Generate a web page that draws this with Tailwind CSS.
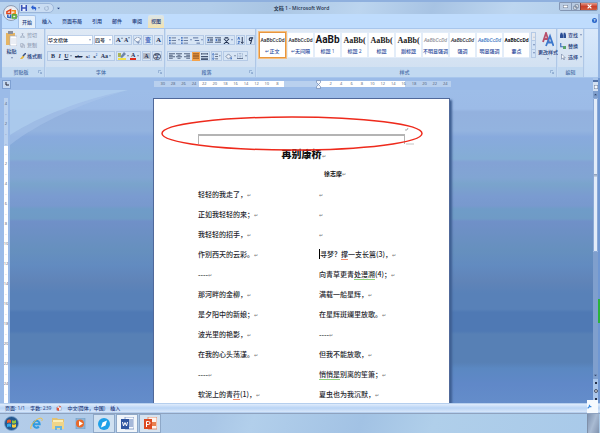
<!DOCTYPE html>
<html lang="zh-CN">
<head>
  <meta charset="UTF-8" />
  <meta name="viewport" content="width=device-width, initial-scale=1.0" />
  <title>文档 1 - Microsoft Word</title>
  <script src="https://cdn.jsdelivr.net/npm/@tailwindcss/browser@4"></script>
</head>
<body class="flex h-screen flex-col overflow-hidden bg-[#93b4e2] font-['Open_Sans','Noto_Sans_CJK_SC',sans-serif] text-[5px] leading-none font-medium text-[#1e3a7a]">
  <!-- shared icons -->
  <svg class="hidden">
    <symbol id="launch" viewBox="0 0 8 8"><path d="M1 6V1h5M4 4l3 3M7 4v3H4" fill="none" stroke="#6f8fbd" /></symbol>
    <symbol id="down" viewBox="0 0 4 4"><path d="M0 1h4L2 3z" fill="currentColor" /></symbol>
    <symbol id="lines" viewBox="0 0 8 8"><path d="M0 1h8M0 3h5M0 5h8M0 7h5" stroke="currentColor" fill="none" /></symbol>
    <symbol id="list" viewBox="0 0 8 8"><path d="M3 1h5M3 4h5M3 7h5" stroke="#5d6f90" fill="none" /><path d="M0 1h2M0 4h2M0 7h2" stroke="#2f62b8" stroke-width="1.6" /></symbol>
    <symbol id="indent" viewBox="0 0 8 8"><path d="M0 1h8M4 3h4M4 5h4M0 7h8" stroke="#2b3b5c" fill="none" /><path d="M3 2v4L0 4z" fill="#2f62b8" /></symbol>
  </svg>

  <!-- title bar -->
  <header class="relative z-10 flex h-[14px] shrink-0 items-center border-t-2 border-[#8fb0de] bg-[linear-gradient(110deg,#b9d3ee_0%,#b2cdea_35%,#a9c5e3_45%,#bcd5ef_60%,#a7c3e3_72%,#bdd6f0_85%,#b0cce9_100%)] pl-[3px]">
    <button class="mt-[10px] flex size-[16px] shrink-0 items-center justify-center rounded-full border border-[#8f9db5] bg-[radial-gradient(#ffffff,#d5dce8)]" aria-label="Office">
      <svg class="size-[11px]" viewBox="0 0 12 12" fill="none" stroke-width="1.7">
        <path d="M1 4l4-2v4H1z" stroke="#e2471d" /><path d="M6 3h4v3H7" stroke="#f08a1c" />
        <path d="M2 7v3l3 .5V7" stroke="#2a62c0" /><path d="M7 7.500h4V11H7z" stroke="#5aa83c" />
      </svg>
    </button>
    <div class="flex h-[10px] items-center gap-[4px] rounded-r-full border border-[#9bb6da] bg-[#c9dcf2] pr-[4px] pl-[1px]">
      <button aria-label="保存"><svg class="size-[6px]" viewBox="0 0 8 8"><path d="M0 0h8v8H0z" fill="#3a53b8" /><path d="M2 0h4v3H2zM2 5h4v3H2z" fill="#eef3ff" /></svg></button>
      <button class="flex items-center gap-[1px]" aria-label="撤消"><svg class="size-[6px]" viewBox="0 0 8 8"><path d="M0 3l3-3v2c5 0 5 4 2 6 1-2 1-3-2-3v2z" fill="#2b5fd0" /></svg><svg class="size-[2px]"><use href="#down" /></svg></button>
      <button aria-label="恢复"><svg class="size-[5px]" viewBox="0 0 8 8" fill="none" stroke="#9db2cf" stroke-width="1.500"><path d="M2 1C0 4 1 7 4 7s4-3 2-6M4 1h3" /></svg></button>
    </div>
    <button class="ml-[3px]" aria-label="自定义"><svg class="size-[3px]"><use href="#down" /></svg></button>
    <h1 class="flex-1 pr-[16px] text-center text-[5px] font-semibold text-[#26334d]">文档 1 - Microsoft Word</h1>
    <div class="mr-[2px] mb-[3px] flex h-[9px] overflow-hidden rounded-b-[2px] border border-[#8396b4] text-white">
      <button class="flex w-[11px] items-center justify-center bg-[#b9cbe2]" aria-label="最小化"><svg class="h-[3px] w-[5px]"><path d="M0 0h5v3H0z" fill="#fff" stroke="#65758f" /></svg></button>
      <button class="flex w-[9px] items-center justify-center border-l border-[#8396b4] bg-[#b9cbe2]" aria-label="还原"><svg class="size-[6px]" viewBox="0 0 8 8" fill="#fff" stroke="#65758f"><path d="M3 1h4v4H3zM1 3h4v4H1z" /></svg></button>
      <button class="flex w-[17px] items-center justify-center border-l border-[#8f3a32] bg-[linear-gradient(#e29a8a,#c9402c_50%,#d05a3c)]" aria-label="关闭"><svg class="size-[5px]" viewBox="0 0 8 8" stroke="#fff" stroke-width="2"><path d="M1 1l6 6M7 1L1 7" /></svg></button>
    </div>
  </header>

  <!-- ribbon tabs -->
  <nav class="mx-[2px] flex h-[14px] shrink-0 items-end gap-[2px] bg-[#bfdcfd] pl-[16px]">
    <button class="h-[13px] rounded-t-[2px] border border-b-0 border-[#a3c1e8] bg-[#e6f0fb] px-[3px]">开始</button>
    <button class="h-[13px] px-1">插入</button>
    <button class="h-[13px] px-1">页面布局</button>
    <button class="h-[13px] px-1">引用</button>
    <button class="h-[13px] px-1">邮件</button>
    <button class="h-[13px] px-1">审阅</button>
    <button class="h-[13px] rounded-t-[2px] bg-[linear-gradient(#dce6ea,#f3e2ae)] px-[3px]">视图</button>
    <button class="mr-[1px] mb-[5px] ml-auto flex size-[5px] items-center justify-center rounded-full bg-[#2a66c8] text-[4px] font-bold text-white" aria-label="帮助">?</button>
  </nav>

  <!-- ribbon -->
  <section class="mx-[2px] flex h-[50px] shrink-0 gap-[1px] border-y border-[#a8c6ec] bg-[#c9ddf4]">
    <div class="flex w-[43px] flex-col border-r border-[#afc7e6] bg-[linear-gradient(#dfe9f5,#cfdff1)]">
      <div class="flex flex-1 gap-[3px] pt-[2px] pl-[4px]">
        <button class="flex w-[11px] flex-col items-center gap-[3px]">
          <svg class="h-[15px] w-[11px]" viewBox="0 0 11 15"><path d="M0 2h9v12H0z" fill="#e5b463" /><path d="M2 0h5v3H2z" fill="#8b8f9c" /><path d="M4 5h7v10H4z" fill="#fff" stroke="#9aa9c4" stroke-width=".6" /><path d="M5 8h5M5 10h5M5 12h5" stroke="#b9c6dd" stroke-width=".6" /></svg>
          粘贴
          <svg class="size-[2px]"><use href="#down" /></svg>
        </button>
        <div class="flex flex-col gap-[5px] pt-[2px]">
          <button class="flex items-center gap-[2px] text-[#93a1b8]"><svg class="size-[5px]" viewBox="0 0 8 8" fill="none" stroke="currentColor"><path d="M3 0l2 5M5 0L3 5" /><circle cx="2" cy="6.500" r="1.200" /><circle cx="6" cy="6.500" r="1.200" /></svg>剪切</button>
          <button class="flex items-center gap-[2px] text-[#93a1b8]"><svg class="size-[5px]" viewBox="0 0 8 8" fill="#eef2f8" stroke="currentColor"><path d="M1 1h4v5H1zM3 3h4v5H3z" /></svg>复制</button>
          <button class="flex items-center gap-[1px] whitespace-nowrap"><svg class="size-[6px]" viewBox="0 0 8 8"><path d="M4 3l2 2-3 3H0z" fill="#e8b740" /><path d="M8 0L4 4" stroke="#3a4f80" stroke-width="2" /></svg>格式刷</button>
        </div>
      </div>
      <h2 class="flex h-[10px] items-center bg-[#c2d9f1] px-[2px] text-[5px] text-[#4a6fa8]"><span class="flex-1 text-center">剪贴板</span><svg class="size-[4px]"><use href="#launch" /></svg></h2>
    </div>

    <div class="flex w-[119px] flex-col border-r border-[#afc7e6] bg-[linear-gradient(#dfe9f5,#cfdff1)]">
      <div class="flex flex-1 flex-col gap-[6px] pt-[6px] pl-[1px]">
        <div class="flex h-[10px] items-stretch gap-[1px]">
          <label class="relative flex w-[46px] items-center"><select class="h-full w-full appearance-none border border-[#bdd0ea] bg-white text-[5px] text-[#222b3c]" aria-label="字体"><option>华文楷体</option></select><svg class="absolute right-[2px] size-[2px]"><use href="#down" /></svg></label>
          <label class="relative flex w-[19px] items-center"><select class="h-full w-full appearance-none border border-[#bdd0ea] bg-white text-[5px] text-[#222b3c]" aria-label="字号"><option>四号</option></select><svg class="absolute right-[2px] size-[2px]"><use href="#down" /></svg></label>
          <div class="flex w-[18px] items-center justify-around border border-[#b5cae6] bg-[#d7e5f5] font-['Liberation_Serif'] font-bold text-[#1f2f50]">
            <button class="flex items-start text-[7px]" aria-label="增大字体">A<svg class="size-[2px] rotate-180"><use href="#down" /></svg></button><button class="flex items-start text-[6px]" aria-label="缩小字体">A<svg class="size-[2px]"><use href="#down" /></svg></button>
          </div>
          <button class="flex w-[9px] items-center justify-center border border-[#b5cae6] bg-[#d7e5f5]" aria-label="清除格式"><svg class="size-[7px]" viewBox="0 0 8 8"><path d="M0 3l4-3 4 2-4 4z" fill="#f3f6fb" stroke="#6c7ea0" stroke-width=".7" /><path d="M2 5l3 3 2-3z" fill="#7f93b8" /></svg></button>
          <button class="w-[10px] border border-[#b5cae6] bg-[#d7e5f5] text-[6px] font-bold text-[#2f57b5]">变</button>
          <button class="w-[9px] border border-[#b5cae6] bg-[#d7e5f5] font-['Liberation_Serif'] text-[7px] font-bold text-[#1f2f50]">A</button>
        </div>
        <div class="flex h-[10px] items-stretch gap-[1px] text-[#1f2f50]">
          <div class="flex w-[68px] items-center justify-between border border-[#b5cae6] bg-[#d7e5f5] px-[3px] font-['Liberation_Serif'] text-[6px] font-bold">
            <button>B</button><button class="italic">I</button>
            <button class="flex items-center gap-[1px]"><span class="underline">U</span><svg class="size-[2px]"><use href="#down" /></svg></button>
            <button class="text-[5px] line-through">abc</button><button class="text-[5px]">x<sub class="text-[3px] text-[#2f62b8]">2</sub></button><button class="text-[5px]">x<sup class="text-[3px] text-[#2f62b8]">2</sup></button>
            <button class="flex items-center gap-[1px]">Aa<svg class="size-[2px]"><use href="#down" /></svg></button>
          </div>
          <div class="flex w-[25px] items-center justify-around border border-[#b5cae6] bg-[#d7e5f5]">
            <button class="flex items-center gap-[1px]" aria-label="突出显示"><svg class="size-[8px]" viewBox="0 0 8 8"><path d="M0 6h8v2H0z" fill="#f2e24a" /><path d="M2 5l4-5 2 2-4 4z" fill="#6e86a8" /><path d="M0 1h3v4H0z" fill="#a9b35c" /></svg><svg class="size-[2px]"><use href="#down" /></svg></button>
            <button class="flex items-center gap-[1px]"><span class="border-b-2 border-[#e02c1d] px-[1px] font-['Liberation_Serif'] text-[6px] font-bold">A</span><svg class="size-[2px]"><use href="#down" /></svg></button>
          </div>
          <button class="flex w-[9px] items-center justify-center border border-[#b5cae6] bg-[#d7e5f5]"><span class="bg-[#b3b9c5] px-[1px] font-['Liberation_Serif'] text-[6px] font-bold">A</span></button>
          <button class="flex w-[10px] items-center justify-center border border-[#b5cae6] bg-[#d7e5f5]"><span class="rounded-full border border-[#43506b] text-[5px] font-bold">字</span></button>
        </div>
      </div>
      <h2 class="flex h-[10px] items-center bg-[#c2d9f1] px-[2px] text-[5px] text-[#4a6fa8]"><span class="flex-1 pr-[4px] text-center">字体</span><svg class="size-[4px]"><use href="#launch" /></svg></h2>
    </div>

    <div class="flex w-[90px] flex-col border-r border-[#afc7e6] bg-[linear-gradient(#dfe9f5,#cfdff1)]">
      <div class="flex flex-1 flex-col gap-[6px] pt-[6px] pl-[1px]">
        <div class="flex h-[10px] items-stretch gap-[1px]">
          <div class="flex w-[37px] items-center justify-around border border-[#b5cae6] bg-[#d7e5f5]">
            <button class="flex items-center gap-[2px]" aria-label="项目符号"><svg class="size-[7px]"><use href="#list" /></svg><svg class="size-[2px]"><use href="#down" /></svg></button>
            <button class="flex items-center gap-[2px]" aria-label="编号"><svg class="size-[7px]"><use href="#list" /></svg><svg class="size-[2px]"><use href="#down" /></svg></button>
            <button class="flex items-center gap-[1px]" aria-label="多级列表"><svg class="size-[7px]" viewBox="0 0 8 8" stroke="#4b6595"><path d="M0 1h6M2 4h5M4 7h4" /></svg><svg class="size-[2px]"><use href="#down" /></svg></button>
          </div>
          <div class="flex w-[30px] items-center justify-around border border-[#b5cae6] bg-[#d7e5f5]">
            <button aria-label="减少缩进"><svg class="size-[6px]"><use href="#indent" /></svg></button>
            <button aria-label="增加缩进"><svg class="size-[6px]"><use href="#indent" /></svg></button>
            <button class="flex items-center gap-[1px]" aria-label="中文版式"><svg class="size-[7px]" viewBox="0 0 8 8" stroke="#1f2f50" stroke-width="1.200"><path d="M1 2l6 6M7 2L1 8M2 1h4" /></svg><svg class="size-[2px]"><use href="#down" /></svg></button>
          </div>
          <button class="flex w-[9px] items-center justify-center border border-[#b5cae6] bg-[#d7e5f5]" aria-label="排序"><svg class="size-[7px]" viewBox="0 0 8 8" fill="none"><path d="M1 3l1-3 1 3M1 5h2L1 8h2" stroke="#2f62b8" /><path d="M6 0v7M4.500 5.500L6 7.500l1.500-2" stroke="#1f2f50" /></svg></button>
          <button class="flex w-[9px] items-center justify-center border border-[#b5cae6] bg-[#d7e5f5]" aria-label="显示标记"><svg class="size-[7px]" viewBox="0 0 8 8" fill="none"><path d="M6 1L4 8M7 1H4a1 1 0 000 3h1" stroke="#1f2f50" stroke-width="1.200" /></svg></button>
        </div>
        <div class="flex h-[10px] items-stretch gap-[1px] text-[#2b3b5c]">
          <div class="flex w-[43px] items-center justify-around border border-[#b5cae6] bg-[#d7e5f5]">
            <button aria-label="左对齐"><svg class="size-[6px]"><use href="#lines" /></svg></button>
            <button aria-label="居中"><svg class="size-[6px]" viewBox="0 0 8 8" stroke="currentColor"><path d="M0 1h8M2 3h4M0 5h8M2 7h4" /></svg></button>
            <button aria-label="右对齐"><svg class="size-[6px] -scale-x-100"><use href="#lines" /></svg></button>
            <button class="flex h-[9px] w-[8px] items-center justify-center bg-[#f4a34c]" aria-label="两端对齐"><svg class="size-[6px]" viewBox="0 0 8 8" stroke="#7c4417"><path d="M0 1h8M0 3h8M0 5h8M0 7h8" /></svg></button>
            <button aria-label="分散对齐"><svg class="size-[7px]" viewBox="0 0 8 8" stroke="currentColor"><path d="M0 0v2M8 0v2M0 1h8M0 4h8M0 6h8M0 7.500h8" /></svg></button>
          </div>
          <button class="flex w-[11px] items-center justify-center gap-[1px] border border-[#b5cae6] bg-[#d7e5f5]" aria-label="行距"><svg class="size-[7px]" viewBox="0 0 8 8" fill="none"><path d="M1.500 0v8M0 2l1.500-2L3 2M0 6l1.500 2L3 6" stroke="#2f62b8" stroke-width=".8" /><path d="M4 1h4M4 4h4M4 7h4" stroke="#43506b" /></svg><svg class="size-[2px]"><use href="#down" /></svg></button>
          <div class="flex w-[25px] items-center justify-around border border-[#b5cae6] bg-[#d7e5f5]">
            <button class="flex items-center gap-[2px]" aria-label="底纹"><svg class="size-[7px]" viewBox="0 0 8 8"><path d="M1 4l3-3 3 3-3 3z" fill="#e9eef6" stroke="#5f7396" stroke-width=".8" /><path d="M7 4l1 3H6z" fill="#2f62b8" /></svg><svg class="size-[2px]"><use href="#down" /></svg></button>
            <button class="flex items-center gap-[2px]" aria-label="边框"><svg class="size-[6px]" viewBox="0 0 8 8" fill="none" stroke="#7088b0" stroke-width=".8"><path d="M.5.5h7v7h-7zM4 0v8M0 4h8" stroke-dasharray="1 1" /><path d="M0 7.500h8" stroke="#1f2f50" /></svg><svg class="size-[2px]"><use href="#down" /></svg></button>
          </div>
        </div>
      </div>
      <h2 class="flex h-[10px] items-center bg-[#c2d9f1] px-[2px] text-[5px] text-[#4a6fa8]"><span class="flex-1 pr-[4px] text-center">段落</span><svg class="size-[4px]"><use href="#launch" /></svg></h2>
    </div>

    <!-- style gallery -->
    <div class="flex min-w-0 flex-1 flex-col border-r border-[#afc7e6] bg-[linear-gradient(#dfe9f5,#cfdff1)]">
      <div class="flex flex-1 items-start gap-[2px] pt-[3px] pl-[2px]">
        <div class="flex h-[26px] gap-[2px] bg-[#e3edf9] text-center whitespace-nowrap text-[#2a4a9c]">
          <button class="flex w-[27px] flex-col items-center justify-between border border-[#e8963e] bg-white pt-[5px] pb-[3px] ring-1 ring-[#f3bf82]"><span class="font-['Roboto'] text-[#2b2b33]">AaBbCcDd</span><span>↵正文</span></button>
          <button class="my-[1px] flex w-[25px] flex-col items-center justify-between bg-white pt-[5px] pb-[3px]"><span class="font-['Roboto'] text-[#2b2b33]">AaBbCcDd</span><span>↵无间隔</span></button>
          <button class="my-[1px] flex w-[25px] flex-col items-center justify-between bg-white pt-[2px] pb-[3px]"><span class="font-['Roboto'] text-[10px] font-bold text-[#15151c]">AaBb</span><span>标题 1</span></button>
          <button class="my-[1px] flex w-[25px] flex-col items-center justify-between bg-white pt-[4px] pb-[3px]"><span class="font-['Liberation_Serif'] text-[8px] font-bold text-[#222]">AaBb(</span><span>标题 2</span></button>
          <button class="my-[1px] flex w-[25px] flex-col items-center justify-between bg-white pt-[4px] pb-[3px]"><span class="font-['Liberation_Serif'] text-[8px] font-bold text-[#222]">AaBb(</span><span>标题</span></button>
          <button class="my-[1px] flex w-[25px] flex-col items-center justify-between bg-white pt-[4px] pb-[3px]"><span class="font-['Liberation_Serif'] text-[8px] font-bold text-[#222]">AaBb(</span><span>副标题</span></button>
          <button class="my-[1px] flex w-[25px] flex-col items-center justify-between bg-white pt-[5px] pb-[3px]"><span class="font-['Roboto'] text-[#8e8e96] italic">AaBbCcDd</span><span>不明显强调</span></button>
          <button class="my-[1px] flex w-[25px] flex-col items-center justify-between bg-white pt-[5px] pb-[3px]"><span class="font-['Roboto'] text-[#2b2b33] italic">AaBbCcDd</span><span>强调</span></button>
          <button class="my-[1px] flex w-[25px] flex-col items-center justify-between bg-white pt-[5px] pb-[3px]"><span class="font-['Roboto'] text-[#3f78c4] italic">AaBbCcDd</span><span>明显强调</span></button>
          <button class="my-[1px] flex w-[25px] flex-col items-center justify-between bg-white pt-[5px] pb-[3px]"><span class="font-['Roboto'] font-bold text-[#15151c]">AaBbCcDd</span><span>要点</span></button>
        </div>
        <div class="flex h-[26px] w-[5px] shrink-0 flex-col divide-y divide-[#b5cae6] border border-[#b5cae6] bg-[#d3e3f6]">
          <button class="flex flex-1 items-center justify-center bg-[#e6e9ee] text-[#a5afbf]" aria-label="上一行"><svg class="size-[2px] rotate-180"><use href="#down" /></svg></button>
          <button class="flex flex-1 items-center justify-center" aria-label="下一行"><svg class="size-[2px]"><use href="#down" /></svg></button>
          <button class="flex flex-1 items-center justify-center" aria-label="更多"><svg class="size-[2px]"><use href="#down" /></svg></button>
        </div>
        <button class="flex flex-1 flex-col items-center gap-[3px] whitespace-nowrap">
          <svg class="h-[15px] w-[12px]" viewBox="0 0 12 15" fill="none" stroke-width="1.800"><path d="M1 10L4 1l3 9M2 7h4" stroke="#b8506c" /><path d="M4 14L8 4l3.500 10M5.500 10.500h5" stroke="#3d78cc" /></svg>
          更改样式
          <svg class="size-[2px]"><use href="#down" /></svg>
        </button>
      </div>
      <h2 class="flex h-[10px] items-center bg-[#c2d9f1] px-[2px] text-[5px] text-[#4a6fa8]"><span class="flex-1 text-center">样式</span><svg class="size-[4px]"><use href="#launch" /></svg></h2>
    </div>

    <div class="flex w-[26px] flex-col border-r border-[#afc7e6] bg-[linear-gradient(#dfe9f5,#cfdff1)]">
      <div class="flex flex-1 flex-col gap-[5px] pt-[3px] pl-[2px]">
        <button class="flex items-center gap-[2px]"><svg class="size-[6px]" viewBox="0 0 8 8" fill="#2c4f96"><path d="M1 1h2l1 3v4H0V4zM5 1h2l1 3v4H4.500V4z" /></svg>查找<svg class="size-[2px]"><use href="#down" /></svg></button>
        <button class="flex items-center gap-[2px]"><svg class="size-[6px]" viewBox="0 0 8 8"><path d="M1 0v5h3" fill="none" stroke="#3c6cb8" stroke-width="1.500" /><path d="M4 4h4v4H4z" fill="#58a36c" /></svg>替换</button>
        <button class="flex items-center gap-[2px]"><svg class="size-[6px]" viewBox="0 0 8 8"><path d="M2 0v7l2-2 1 3 1-.5L5 5h2z" fill="#fff" stroke="#6c7ea0" stroke-width=".8" /></svg>选择<svg class="size-[2px]"><use href="#down" /></svg></button>
      </div>
      <h2 class="flex h-[10px] items-center justify-center bg-[#c2d9f1] text-[5px] text-[#4a6fa8]">编辑</h2>
    </div>
    <div class="w-[13px] bg-[linear-gradient(#d9e8fa,#c8def6)]"></div>
  </section>

  <!-- work area -->
  <main class="flex min-h-0 flex-1 bg-[#9bbbe8] pl-[2px]">
    <div class="flex min-w-0 flex-1 flex-col">
      <div class="flex h-[12px] shrink-0 items-center">
        <button class="flex size-[9px] items-center justify-center border border-[#7ea0d2] bg-[#c5d9f2]" aria-label="制表符"><svg class="size-[4px]"><path d="M1 0v3h3" fill="none" stroke="#223" /></svg></button>
        <!-- horizontal ruler -->
        <div class="mx-auto flex h-[6px] w-full max-w-[297px] items-center justify-between bg-[linear-gradient(90deg,#b9d0ee_45px,#ffffff_45px_130px,#b9d0ee_130px_165px,#ffffff_165px_251px,#b9d0ee_251px)] text-center text-[4px] text-[#4c5a74]">
          <div class="ml-[4px] grid w-[125px] grid-cols-12"><span>30</span><span>28</span><span>26</span><span>24</span><span>22</span><span>20</span><span>18</span><span>16</span><span>14</span><span>12</span><span>10</span><span>8</span></div>
          <svg class="ml-[29px] h-[9px] w-[5px]" viewBox="0 0 5 9" fill="#eef3fb" stroke="#7088b0" stroke-width=".7"><path d="M.5.5h4v2l-2 2-2-2zM.5 8.500h4v-2l-2-2-2 2z" /></svg>
          <div class="grid w-[125px] grid-cols-12"><span>2</span><span>4</span><span>6</span><span>8</span><span>10</span><span>12</span><span>14</span><span>16</span><span>18</span><span>20</span><span>22</span><span>24</span></div>
        </div>
      </div>
      <div class="flex min-h-0 flex-1">
        <!-- vertical ruler -->
        <div class="mt-[8px] ml-[2px] flex w-[4px] shrink-0 flex-col items-center gap-[6px] overflow-hidden bg-[linear-gradient(#b9d0ee_48px,#ffffff_48px)] pt-[4px] text-[4px] text-[#4c5a74]">
          <span>4</span><span>-</span><span>2</span><span>-</span><span>-</span><span>-</span><span>2</span><span>-</span><span>4</span><span>-</span><span>6</span><span>-</span><span>8</span><span>-</span><span>10</span><span>-</span><span>12</span><span>-</span><span>14</span><span>-</span><span>16</span><span>-</span><span>18</span><span>-</span><span>20</span><span>-</span><span>22</span><span>-</span><span>24</span><span>-</span>
        </div>
        <div class="relative ml-[2px] flex flex-1 justify-center overflow-hidden bg-[linear-gradient(#9dbde8_0%,#9cbbe7_6%,#93b1de_7%,#93b3df_13%,#88aadd_15%,#84add5_22%,#83a2d5_23%,#81a5d3_28%,#7aa4cc_30%,#7a9bd0_34%,#7899ce_37%,#6f9cc8_38%,#6f9bc6_41%,#7090c8_42%,#6690be_51%,#628bc0_56%,#6084b8_61%,#5881b8_65%,#5881b8_70%,#4f79b4_71%,#4f79b4_77%,#5780b5_78%,#5780b5_87%,#5b88c2_89%,#6088c8_94%,#648dca_100%)]">
          <svg class="absolute top-0 left-0 h-[60px] w-[120px]" viewBox="0 0 120 60"><path d="M0 0h118C70 14 30 32 0 55z" fill="#a9c6ec" opacity=".5" /><path d="M0 0h118C70 10 30 26 0 45z" fill="#b2d2f0" opacity=".6" /></svg>
          <article class="relative mt-[8px] w-full max-w-[297px] border border-b-0 border-[#50699a] bg-white font-['Noto_Sans_CJK_SC',sans-serif] text-[7px] leading-[20px] text-[#26272e] shadow-[2px_2px_2px_#3e5f92]">
            <div class="h-[45px] px-[44px] pt-[35px]">
              <div class="h-[10px] border-x border-t-2 border-[#b4b4b4]"></div>
            </div>
            <h2 class="h-[20px] pl-[4px] text-center text-[10px] font-black text-[#111]">再别康桥<span class="text-[5px] leading-none font-normal text-[#777]">↵</span></h2>
            <p class="h-[20px] pl-[67px] text-center text-[6px] font-bold text-[#111]">徐志摩<span class="text-[5px] leading-none font-normal text-[#777]">↵</span></p>
            <div class="grid grid-cols-[121px_1fr] pl-[44px]">
              <div>
                <p class="h-[20px]">轻轻的我走了，<span class="text-[5px] leading-none text-[#777]">↵</span></p>
                <p class="h-[20px]">正如我轻轻的来；<span class="text-[5px] leading-none text-[#777]">↵</span></p>
                <p class="h-[20px]">我轻轻的招手，<span class="text-[5px] leading-none text-[#777]">↵</span></p>
                <p class="h-[20px]">作别西天的云彩。<span class="text-[5px] leading-none text-[#777]">↵</span></p>
                <p class="h-[20px]">----<span class="text-[5px] leading-none text-[#777]">↵</span></p>
                <p class="h-[20px]">那河畔的金柳，<span class="text-[5px] leading-none text-[#777]">↵</span></p>
                <p class="h-[20px]">是夕阳中的新娘；<span class="text-[5px] leading-none text-[#777]">↵</span></p>
                <p class="h-[20px]">波光里的艳影，<span class="text-[5px] leading-none text-[#777]">↵</span></p>
                <p class="h-[20px]">在我的心头荡漾。<span class="text-[5px] leading-none text-[#777]">↵</span></p>
                <p class="h-[20px]">----<span class="text-[5px] leading-none text-[#777]">↵</span></p>
                <p class="h-[20px]">软泥上的青<span class="border-b border-[#f08c6c]">荇</span>(1)，<span class="text-[5px] leading-none text-[#777]">↵</span></p>
              </div>
              <div>
                <p class="h-[20px]"><span class="text-[5px] leading-none text-[#777]">↵</span></p>
                <p class="h-[20px]"><span class="text-[5px] leading-none text-[#777]">↵</span></p>
                <p class="h-[20px]"><span class="text-[5px] leading-none text-[#777]">↵</span></p>
                <p class="h-[20px]"><span class="border-l border-black">寻</span>梦？<span class="border-b border-[#f08c6c]">撑</span>一支长篙(3)，<span class="text-[5px] leading-none text-[#777]">↵</span></p>
                <p class="h-[20px]">向青草更青<span class="border-b border-[#8fd07c]">处漫溯</span>(4)；<span class="text-[5px] leading-none text-[#777]">↵</span></p>
                <p class="h-[20px]">满载一船星辉，<span class="text-[5px] leading-none text-[#777]">↵</span></p>
                <p class="h-[20px]">在星辉斑斓里放歌。<span class="text-[5px] leading-none text-[#777]">↵</span></p>
                <p class="h-[20px]">----<span class="text-[5px] leading-none text-[#777]">↵</span></p>
                <p class="h-[20px]">但我不能放歌，<span class="text-[5px] leading-none text-[#777]">↵</span></p>
                <p class="h-[20px]"><span class="border-b border-[#8fd07c]">悄悄是</span>别离的笙箫；<span class="text-[5px] leading-none text-[#777]">↵</span></p>
                <p class="h-[20px]">夏虫也为我沉默，<span class="text-[5px] leading-none text-[#777]">↵</span></p>
              </div>
            </div>
            <!-- header area marked on the page -->
            <svg class="absolute top-[17px] left-[7px] h-[36px] w-[264px]" viewBox="0 0 264 36" fill="none"><path d="M245 28h8" stroke="#c4c4c4" /><path d="M247 12l-1 2h-2" stroke="#888" stroke-width=".7" /><ellipse cx="131" cy="17.500" rx="130" ry="16.500" stroke="#ee2a1c" stroke-width="1.500" /></svg>
          </article>
        </div>
      </div>
    </div>
    <!-- vertical scroll bar -->
    <div class="flex w-[7px] shrink-0 flex-col items-center border-r-2 border-[#6f97d2] bg-[#a9c5ea] pt-[2px] text-[#33466e]">
      <button class="h-[2px] w-full bg-[#5472a6]" aria-label="拆分"></button>
      <button class="flex h-[9px] w-full items-center justify-center bg-[#d3e0f1]" aria-label="标尺"><svg class="size-[4px]" viewBox="0 0 4 4"><path d="M0 0h4v4H0z" fill="#f4f7fb" stroke="#6a7c9c" /></svg></button>
      <button class="flex h-[7px] w-full items-center justify-center bg-[#7f9fcd]" aria-label="向上"><svg class="size-[3px] rotate-180"><use href="#down" /></svg></button>
      <div class="flex h-[154px] w-full items-center justify-center rounded-[1px] border border-[#8ba9d6] bg-[#e2ecf9]"><svg class="size-[3px]" viewBox="0 0 4 4" stroke="#6a7c9c"><path d="M0 .5h4M0 2.500h4" /></svg></div>
      <div class="flex w-full flex-1 flex-col items-end bg-[#7f9fcd] pt-[47px]"><span class="-mr-[2px] h-[24px] w-[2px] bg-[#2bb33a]"></span></div>
      <button class="flex h-[7px] w-full items-center justify-center bg-[#7f9fcd]" aria-label="向下"><svg class="size-[3px]"><use href="#down" /></svg></button>
      <button class="flex h-[8px] items-center" aria-label="上一页"><svg class="size-[2px]"><path d="M0 0h3v3H0z" fill="#25304a" /></svg></button>
      <button class="flex h-[8px] items-center" aria-label="选择浏览对象"><svg class="size-[4px]"><circle cx="2" cy="2" r="1.500" fill="#ccc" stroke="#4a566e" /></svg></button>
      <button class="flex h-[8px] items-center" aria-label="下一页"><svg class="size-[2px]"><path d="M0 0h3v3H0z" fill="#25304a" /></svg></button>
    </div>
  </main>

  <!-- status bar -->
  <footer class="relative flex h-[10px] shrink-0 items-center gap-[5px] border-y border-[#b6cfee] bg-[linear-gradient(#dfecfc,#b9d4f5_50%,#d8e7fa)] pl-[5px]">
    <span>页面: 1/1</span><span>字数: 239</span>
    <svg class="size-[6px]" viewBox="0 0 8 8"><path d="M1 3l3-2 3 2v4H1z" fill="#f4f6fa" stroke="#8095bb" stroke-width=".7" /><path d="M1 3l3 1v4L1 7z" fill="#e2533a" /><path d="M4 1l3 1-2 2z" fill="#e2533a" /></svg>
    <span>中文(简体，中国)</span><span>插入</span>
    <button class="absolute right-[2px] -bottom-px flex h-[13px] w-[11px] items-center justify-start bg-[#f6fafe]" aria-label="工具"><svg class="size-[5px]" viewBox="0 0 8 8" fill="none" stroke="#3d8be0" stroke-width="2"><path d="M1 7l3-3V1M4 4h3" /></svg></button>
  </footer>

  <!-- taskbar -->
  <div class="flex h-[20px] shrink-0 items-stretch border-t border-[#8ea2bf] bg-[linear-gradient(110deg,#b4cde9_0%,#a9c6e6_35%,#b2cfeb_42%,#a2c2e4_60%,#b0cfea_72%,#a8c9e9_100%)] pl-[4px]">
    <button class="mr-[11px] flex items-center" aria-label="开始菜单"><svg class="size-[15px]" viewBox="0 0 15 15"><circle cx="7.500" cy="7.500" r="7" fill="#24588e" stroke="#7fa5cf" stroke-width=".8" /><path d="M3 4.500q2-1.500 4-.5v3q-2-1-4 .3z" fill="#ee5a28" /><path d="M8 4.200q2 1 4-.2v3q-2 1-4 .2z" fill="#93c83e" /><path d="M3 8.200q2-1.200 4-.2v3q-2-1-4 .2z" fill="#35a9ea" /><path d="M8 8.300q2 1 4-.2v3q-2 1.200-4 .2z" fill="#fbd03c" /></svg></button>
    <button class="mr-[9px] flex items-center" aria-label="Internet Explorer"><svg class="size-[13px]" viewBox="0 0 13 13" fill="none"><path d="M3.500 7.200h6.200a3.200 3.400 0 10-.8 2.300" stroke="#2f9be0" stroke-width="2" /><path d="M1 12C-1 9 8-1 12 1.500c1 1-.5 2.500-.5 2.500" stroke="#edc14a" /></svg></button>
    <button class="mr-[10px] flex items-center" aria-label="资源管理器"><svg class="size-[13px]" viewBox="0 0 13 13"><path d="M0 1h5l1 1h6v10H0z" fill="#e2c272" /><path d="M1 3h10v5H1z" fill="#f9eeb9" /><path d="M0 5h12v7H0z" fill="#f0d588" /><path d="M3 13V9h7v4H8v-2H5v2z" fill="#6ab5dc" /></svg></button>
    <button class="mr-[7px] flex items-center" aria-label="媒体播放器"><svg class="size-[11px]" viewBox="0 0 11 11"><path d="M1 0h9v11H1z" fill="#8db5d8" stroke="#6f9ac4" stroke-width=".6" /><circle cx="5" cy="5.500" r="4" fill="#e9692a" /><path d="M4 3l4 2.500L4 8z" fill="#fff" /></svg></button>
    <button class="mr-[1px] flex w-[22px] items-center justify-center border border-[#8ea8c8] bg-[#cfe0f1]" aria-label="浏览器"><svg class="size-[12px]" viewBox="0 0 12 12"><circle cx="6" cy="6" r="6" fill="#1fa0e8" /><path d="M9 2.500L7.500 7.500 3 9.500l1.500-5z" fill="#fff" /></svg></button>
    <button class="mr-[1px] flex w-[22px] items-center justify-center border border-[#8ea8c8] bg-[#f0f5fa]" aria-label="Word"><svg class="size-[13px]" viewBox="0 0 13 13"><path d="M4 0h9v12H4z" fill="#f8fbff" stroke="#7390bf" stroke-width=".8" /><path d="M8 3h4M8 5h4M8 7h4M8 9h4" stroke="#5577b3" /><path d="M0 2h8v10H0z" fill="#2f55a0" /><path d="M1.500 5l1 4L4 5.500 5.500 9l1-4" fill="none" stroke="#fff" /></svg></button>
    <button class="flex w-[22px] items-center justify-center border border-[#8ea8c8] bg-[#d6e3f0]" aria-label="PowerPoint"><svg class="size-[13px]" viewBox="0 0 13 13"><path d="M4 0h9v12H4z" fill="#fdf3ee" stroke="#dd7a52" stroke-width=".8" /><path d="M8 5h4v4H8z" fill="#e9804f" /><path d="M0 2h8v10H0z" fill="#dc4a22" /><path d="M2.500 10V4.500h2a1.500 1.500 0 010 3h-2" fill="none" stroke="#fff" /></svg></button>
    <button class="mr-[1px] ml-auto w-[12px] border-l border-[#7f90a9] bg-[linear-gradient(110deg,#7f93b0,#a9bbd3_50%,#8193ae)]" aria-label="显示桌面"></button>
  </div>
</body>
</html>
